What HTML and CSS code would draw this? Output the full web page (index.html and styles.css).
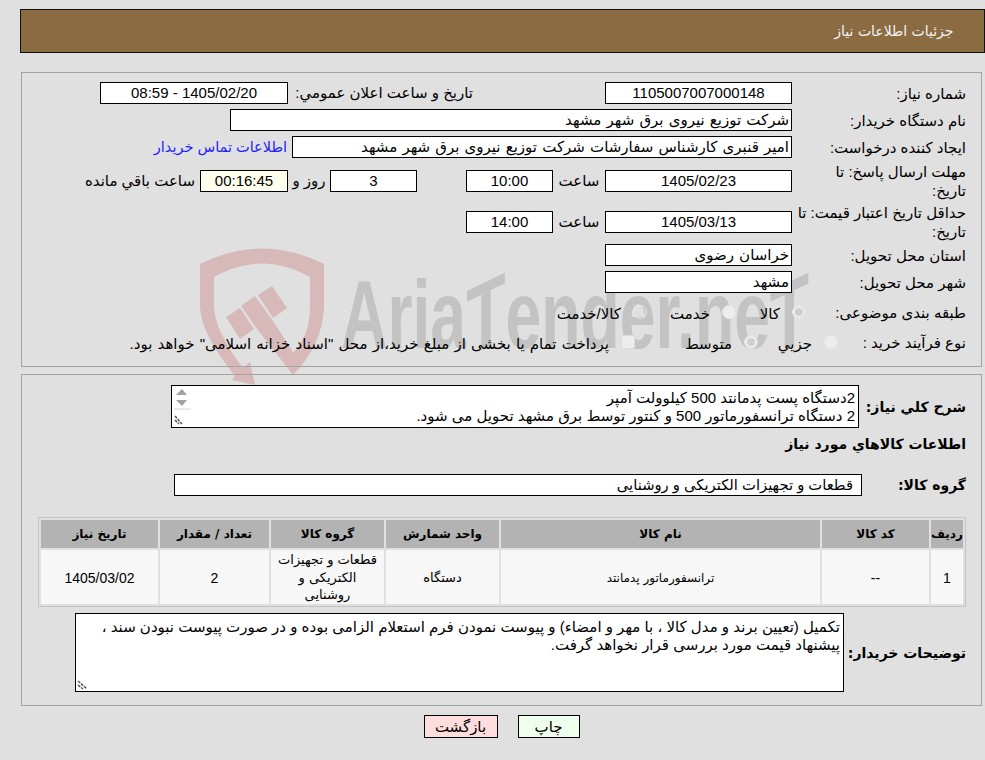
FILE: index.html
```html
<!DOCTYPE html>
<html lang="fa" dir="rtl">
<head>
<meta charset="utf-8">
<title>جزئیات اطلاعات نیاز</title>
<link rel="stylesheet" href="styles.css">
</head>
<body>
<div class="watermark" aria-hidden="true">
  <svg class="wm-shield" width="140" height="150" viewBox="195 240 140 150">
    <path d="M200 264Q262 233 324 264V308Q322 345 293 375V353Q310 335 310 307V277Q262 250 214 277V305Q214 330 243 368L250 362L255 385L232 380L235 376Q202 335 200 308Z"/>
    <path d="M226 317L240 308L254 329L240 339Z"/>
    <path d="M241 306L255 296L273 321L293 352V375L275 352L257 329Z"/>
    <path d="M258 295L272 286L287 308L273 318Z"/>
  </svg>
  <div class="wm-text" dir="ltr">Aria<span class="wm-t">T</span>ender.ne<span class="wm-t">T</span></div>
</div>

<header class="page-title">جزئیات اطلاعات نیاز</header>

<section class="panel info">
  <div class="row">
    <div class="lab">شماره نیاز:</div>
    <div class="box w187 center">1105007007000148</div>
    <div class="lab-pub">تاریخ و ساعت اعلان عمومي:</div>
    <div class="box w188 center">1405/02/20 - 08:59</div>
  </div>
  <div class="row">
    <div class="lab">نام دستگاه خریدار:</div>
    <div class="box w562">شرکت توزیع نیروی برق شهر مشهد</div>
  </div>
  <div class="row">
    <div class="lab">ایجاد کننده درخواست:</div>
    <div class="box w500">امیر قنبری کارشناس سفارشات شرکت توزیع نیروی برق شهر مشهد</div>
    <a class="contact" href="#">اطلاعات تماس خریدار</a>
  </div>
  <div class="row">
    <div class="lab lab-wrap">مهلت ارسال پاسخ: تا تاریخ:</div>
    <div class="box w187 center">1405/02/23</div>
    <div class="unit">ساعت</div>
    <div class="box w87 center">10:00</div>
    <div class="box w87 center days">3</div>
    <div class="unit-days">روز و</div>
    <div class="box w88 center remain">00:16:45</div>
    <div class="after">ساعت باقي مانده</div>
  </div>
  <div class="row">
    <div class="lab">حداقل تاریخ اعتبار قیمت: تا تاریخ:</div>
    <div class="box w187 center">1405/03/13</div>
    <div class="unit">ساعت</div>
    <div class="box w87 center">14:00</div>
  </div>
  <div class="row">
    <div class="lab">استان محل تحویل:</div>
    <div class="box w187">خراسان رضوی</div>
  </div>
  <div class="row">
    <div class="lab">شهر محل تحویل:</div>
    <div class="box w187">مشهد</div>
  </div>
  <div class="row">
    <div class="lab lab-r8">طبقه بندی موضوعی:</div>
    <div class="opt w70"><span class="radio on"></span><span>کالا</span></div>
    <div class="opt w89"><span class="radio"></span><span>خدمت</span></div>
    <div class="opt"><span class="radio hollow"></span><span>کالا/خدمت</span></div>
  </div>
  <div class="row">
    <div class="lab lab-r9">نوع فرآیند خرید :</div>
    <div class="opt w80"><span class="radio"></span><span>جزیي</span></div>
    <div class="opt w123"><span class="radio on"></span><span>متوسط</span></div>
    <div class="opt"><span class="check"></span><span>پرداخت تمام یا بخشی از مبلغ خرید،از محل "اسناد خزانه اسلامی" خواهد بود.</span></div>
  </div>
</section>

<section class="panel needs">
  <div class="desc-row">
    <div class="lab-b desc-lab">شرح کلي نیاز:</div>
    <div class="area area-desc">2دستگاه پست پدمانتد 500 کیلوولت آمپر<br>2 دستگاه ترانسفورماتور 500 و کنتور توسط برق مشهد تحویل می شود.
      <svg class="scroller" width="18" height="41" viewBox="0 0 18 41">
        <path d="M9 3L14 9H3Z" fill="#a3a3a3"/>
        <path d="M3 14H14L9 20Z" fill="#a3a3a3"/>
        <path d="M1 23H18" stroke="#d4d4d4"/>
        <path d="M2 30L9 38M2 34L6 38" stroke="#555" stroke-width="1.5" stroke-dasharray="3 1"/>
      </svg>
    </div>
  </div>
  <h2 class="goods-title">اطلاعات کالاهاي مورد نیاز</h2>
  <div class="group-row">
    <div class="lab-b group-lab">گروه کالا:</div>
    <div class="box group-box">قطعات و تجهیزات الکتریکی و روشنایی</div>
  </div>
  <table class="goods">
    <colgroup>
      <col class="c1"><col class="c2"><col class="c3"><col class="c4"><col class="c5"><col class="c6"><col class="c7">
    </colgroup>
    <thead>
      <tr><th>ردیف</th><th>کد کالا</th><th>نام کالا</th><th>واحد شمارش</th><th>گروه کالا</th><th>تعداد / مقدار</th><th>تاریخ نیاز</th></tr>
    </thead>
    <tbody>
      <tr><td class="num">1</td><td class="num">--</td><td class="name">ترانسفورماتور پدمانتد</td><td>دستگاه</td><td class="wrap">قطعات و تجهیزات الکتریکی و روشنایی</td><td class="num">2</td><td class="num">1405/03/02</td></tr>
    </tbody>
  </table>
  <div class="note-row">
    <div class="lab-b note-lab">توضیحات خریدار:</div>
    <div class="area area-note">تکمیل (تعیین برند و مدل کالا ، با مهر و امضاء) و پیوست نمودن فرم استعلام الزامی بوده و در صورت پیوست نبودن سند ، پیشنهاد قیمت مورد بررسی قرار نخواهد گرفت.
      <svg class="grip" width="12" height="12" viewBox="0 0 12 12">
        <path d="M1 3L10 11M1 7L6 11" stroke="#555" stroke-width="1.5" stroke-dasharray="3 1"/>
      </svg>
    </div>
  </div>
</section>

<div class="actions">
  <button class="btn btn-print" type="button">چاپ</button>
  <button class="btn btn-back" type="button">بازگشت</button>
</div>
</body>
</html>
```

FILE: styles.css
```css
* { box-sizing: border-box; }
html, body { margin: 0; padding: 0; }
body {
  background: #e0e0e0;
  color: #000;
  font-family: "Liberation Sans", "DejaVu Sans", sans-serif;
  font-size: 15px;
  width: 985px;
  height: 760px;
  overflow: hidden;
  padding-top: 9px;
}
.watermark { position: absolute; inset: 0; z-index: -1; overflow: hidden; }
.wm-shield { position: absolute; left: 195px; top: 240px; fill: #d8b9ba; }
.wm-text {
  position: absolute;
  left: 341px;
  top: 265px;
  font-family: "Liberation Sans", sans-serif;
  font-weight: 700;
  font-size: 96px;
  line-height: 100px;
  color: #c3c3c3;
  white-space: nowrap;
  transform: scaleX(0.67);
  transform-origin: 0 50%;
}
.wm-t { display: inline-block; transform: skewY(-18deg); }

.page-title {
  margin: 0 0.5px 0 19.5px;
  height: 44px;
  background: #8b6b42;
  border: 1px solid #111;
  color: #f4f4f4;
  font-size: 14px;
  font-family: "DejaVu Sans", sans-serif;
  line-height: 43px;
  padding-right: 30px;
}
.panel {
  margin: 0 3px 0 21px;
  border: 1px solid #a3a3a3;
}
.info {
  margin-top: 19px;
  height: 295px;
  padding: 9px 15px 0 0;
  display: grid;
  grid-template-rows: 22px 22px 22px 36px 35px 22px 22px 28px 22px;
  row-gap: 5px;
}
.row { display: flex; align-items: center; }
.lab { width: 174px; flex: none; line-height: 19px; padding-left: 4px; }
.lab-wrap { padding-left: 14px; }
.lab-r8 { width: 160px; }
.lab-r9 { width: 128px; }
.box {
  height: 22px;
  flex: none;
  background: #fff;
  border: 1px solid #000;
  line-height: 20px;
  padding: 0 2px;
  white-space: nowrap;
  overflow: hidden;
  word-spacing: 1px;
}
.center { text-align: center; word-spacing: 0; }
.w187 { width: 187px; }
.w188 { width: 188px; }
.w562 { width: 562px; }
.w500 { width: 500px; }
.w88 { width: 88px; }
.w87 { width: 87px; }
.lab-pub { margin-right: 132px; margin-left: 5px; width: 180px; flex: none; white-space: nowrap; }
.contact { margin-right: 5px; color: #2222ff; text-decoration: none; white-space: nowrap; font-size: 14.5px; }
.unit { width: 52px; flex: none; text-align: center; }
.days { margin-right: 49px; }
.unit-days { width: 42px; flex: none; text-align: center; }
.remain { background: #ffffee; }
.after { margin-right: 5px; white-space: nowrap; }

.opt { display: flex; align-items: center; flex: none; white-space: nowrap; word-spacing: 1px; }
.opt > span:last-child { margin-right: 12px; padding-top: 3px; }
.w70 { width: 70px; }
.w89 { width: 89px; }
.w80 { width: 80px; }
.w123 { width: 123px; }
.radio {
  width: 14px;
  height: 14px;
  flex: none;
  border-radius: 50%;
  background: #ededed;
  border: 1px solid #e6e6e6;
}
.radio.on { background: #cfcfcf; box-shadow: inset 0 0 0 2px #efefef; }
.radio.hollow { background: transparent; border-color: #ececec; }
.check {
  width: 14px;
  height: 14px;
  flex: none;
  border-radius: 3px;
  background: #ededed;
  border: 1px solid #dcdcdc;
}

.needs {
  margin-top: 7px;
  height: 332px;
  padding: 10px 15px 0 15px;
}
.lab-b { font-weight: 700; font-size: 14px; flex: none; font-family: "DejaVu Sans", sans-serif; }
.desc-row { display: flex; align-items: center; height: 43px; }
.desc-lab { width: 107px; }
.area {
  position: relative;
  background: #fff;
  border: 1px solid #000;
  line-height: 18px;
  padding: 3px 3px 0;
  flex: none;
}
.area-desc { width: 688px; height: 43px; white-space: nowrap; overflow: hidden; }
.scroller { position: absolute; left: 1px; top: 0; }
.goods-title { margin: 6px 0 0; font-size: 14px; font-weight: 700; line-height: 20px; height: 20px; font-family: "DejaVu Sans", sans-serif; }
.group-row { display: flex; align-items: center; height: 22px; margin-top: 20px; }
.group-lab { width: 104px; }
.group-box { width: 688px; padding-right: 8px; font-size: 14.75px; word-spacing: 0; }
.goods {
  width: 928px;
  margin-top: 21px;
  table-layout: fixed;
  border-collapse: separate;
  border-spacing: 2px;
  border: 1px solid #c4c4c4;
  font-family: "DejaVu Sans", sans-serif;
  font-size: 12px;
}
.c1 { width: 32px; } .c2 { width: 107px; } .c3 { width: 319px; } .c4 { width: 113px; }
.c5 { width: 113px; } .c6 { width: 109px; } .c7 { width: 117px; }
.goods th {
  height: 28px;
  padding: 0;
  background: #b3b3b3;
  font-weight: 700;
  text-align: center;
}
.goods td {
  height: 54px;
  padding: 2px 4px 0;
  background: #f7f7f7;
  text-align: center;
  line-height: 18px;
  font-size: 13px;
}
.goods td.name { font-size: 12px; }
.goods td.wrap { padding: 1px 3px 0; line-height: 17.6px; }
.goods td.num { font-family: "Liberation Sans", sans-serif; font-size: 14px; }
.note-row { display: flex; align-items: center; height: 79px; margin-top: 6px; }
.note-lab { width: 122px; }
.area-note { width: 769px; height: 79px; padding-top: 4px; }
.grip { position: absolute; left: 1px; bottom: 1px; }

.actions {
  margin: 9px 3px 0 21px;
  display: flex;
  justify-content: center;
  gap: 20px;
}
.btn {
  height: 23px;
  padding: 0;
  border: 1px solid #000;
  font: inherit;
  color: #000;
}
.btn-print { width: 62px; background: #eeffee; }
.btn-back { width: 74px; background: #ffdddd; }
```
